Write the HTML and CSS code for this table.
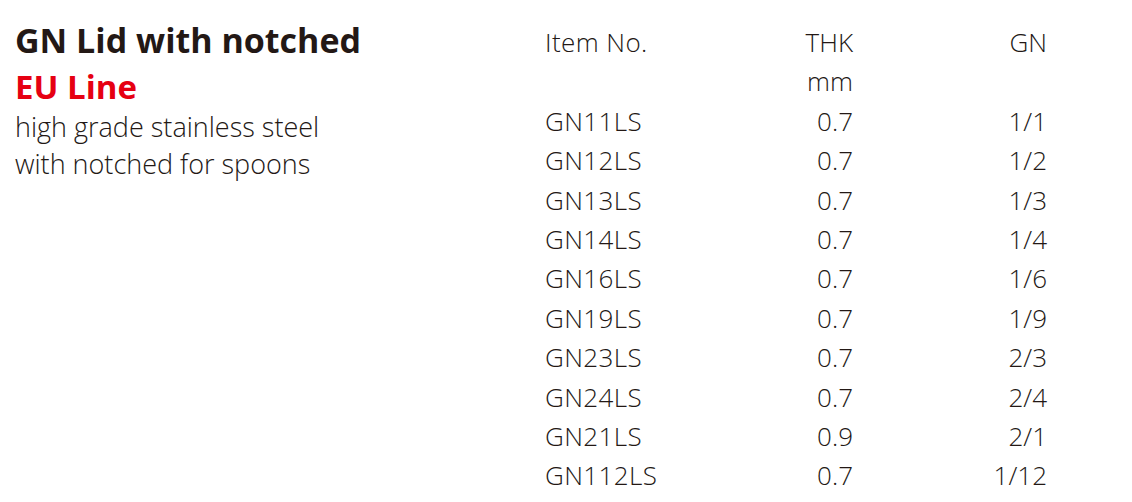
FILE: index.html
```html
<!DOCTYPE html>
<html>
<head>
<meta charset="utf-8">
<link rel="stylesheet" href="styles.css">
</head>
<body>
<div class="page">
  <div class="intro">
    <h1 class="title">GN Lid with notched</h1>
    <h2 class="line">EU Line</h2>
    <p class="desc">high grade stainless steel<br>with notched for spoons</p>
  </div>
  <div class="table">
    <div class="row"><span class="c1">Item No.</span><span class="c2">THK</span><span class="c3">GN</span></div>
    <div class="row"><span class="c1"></span><span class="c2">mm</span><span class="c3"></span></div>
    <div class="row"><span class="c1">GN11LS</span><span class="c2">0.7</span><span class="c3">1/1</span></div>
    <div class="row"><span class="c1">GN12LS</span><span class="c2">0.7</span><span class="c3">1/2</span></div>
    <div class="row"><span class="c1">GN13LS</span><span class="c2">0.7</span><span class="c3">1/3</span></div>
    <div class="row"><span class="c1">GN14LS</span><span class="c2">0.7</span><span class="c3">1/4</span></div>
    <div class="row"><span class="c1">GN16LS</span><span class="c2">0.7</span><span class="c3">1/6</span></div>
    <div class="row"><span class="c1">GN19LS</span><span class="c2">0.7</span><span class="c3">1/9</span></div>
    <div class="row"><span class="c1">GN23LS</span><span class="c2">0.7</span><span class="c3">2/3</span></div>
    <div class="row"><span class="c1">GN24LS</span><span class="c2">0.7</span><span class="c3">2/4</span></div>
    <div class="row"><span class="c1">GN21LS</span><span class="c2">0.9</span><span class="c3">2/1</span></div>
    <div class="row"><span class="c1">GN112LS</span><span class="c2">0.7</span><span class="c3">1/12</span></div>
  </div>
</div>
</body>
</html>
```

FILE: styles.css
```css
html, body {
  margin: 0;
  padding: 0;
  background: #ffffff;
}
body {
  font-family: "Open Sans", sans-serif;
  color: #231815;
}
.page {
  display: flex;
  padding: 0 0 0 15px;
}
.intro {
  width: 530px;
  padding-top: 17px;
}
.title {
  margin: 0;
  font-size: 34px;
  font-weight: 700;
  line-height: 46px;
}
.line {
  margin: 3px 0 0;
  font-size: 33px;
  font-weight: 700;
  color: #e60012;
  line-height: 42px;
}
.desc {
  margin: 0;
  font-size: 27px;
  font-weight: 300;
  line-height: 37px;
}
.table {
  display: flex;
  flex-direction: column;
  padding-top: 23px;
  font-size: 26px;
  font-weight: 300;
}
.row {
  display: grid;
  grid-template-columns: 220px 88px 194px;
  height: 39.4px;
  line-height: 39.4px;
}
.c1 {
  letter-spacing: 0.4px;
}
.c2, .c3 {
  text-align: right;
}
```
